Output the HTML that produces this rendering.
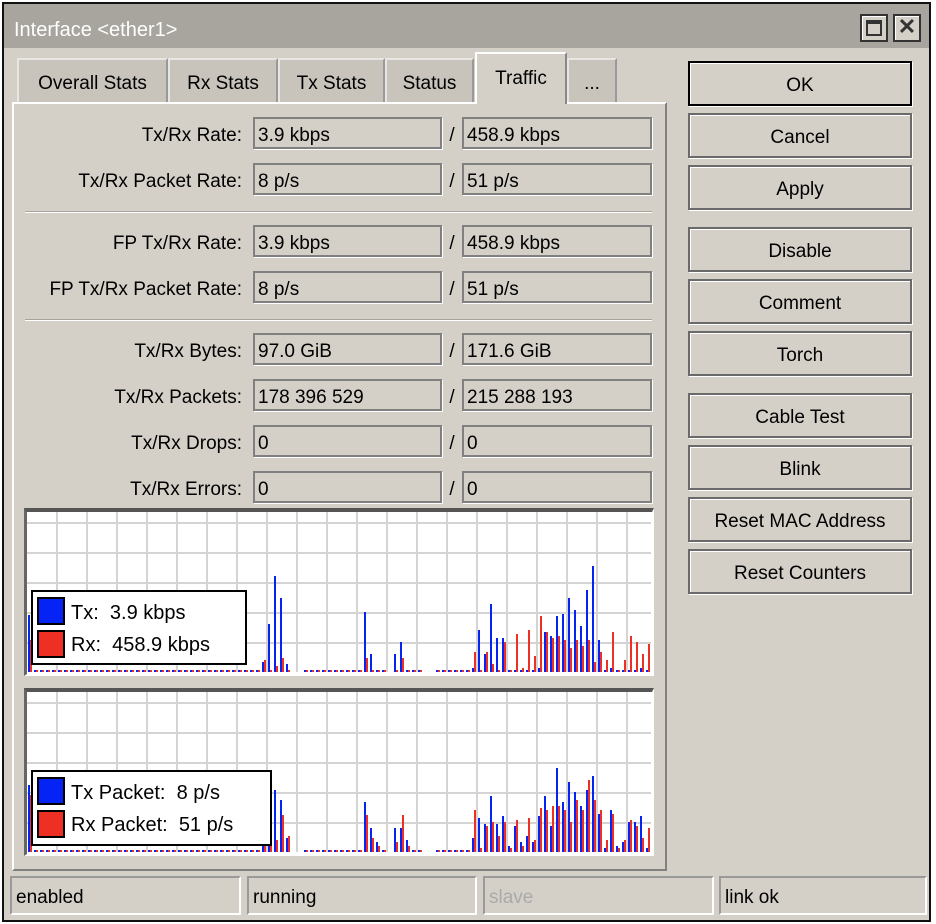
<!DOCTYPE html>
<html><head><meta charset="utf-8"><style>
*{box-sizing:border-box;margin:0;padding:0}
body{width:936px;height:924px;background:#fff;position:relative;overflow:hidden;font-family:"Liberation Sans",sans-serif;font-size:19px;color:#000}
.a{position:absolute}
.win{left:2px;top:2px;width:929px;height:920px;background:#d4d0c8;border:2px solid #111}
.title{left:4px;top:4px;width:925px;height:44px;background:#a8a59f;color:#fff;font-size:20px;line-height:52px;padding-left:10px}
.tb{width:28px;height:28px;top:14px;background:#d4d0c8;border:2px solid #333;box-shadow:inset 1px 1px 0 #fff}
.tab{top:58px;height:44px;background:#c8c4bc;border:2px solid #e8e6e2;border-bottom:none;border-right-color:#999;text-align:center;line-height:48px;font-size:19px}
.tab.on{top:52px;height:52px;background:#d4d0c8;border-color:#fff;border-right-color:#888;line-height:50px;z-index:2}
.panel{left:12px;top:102px;width:655px;height:769px;border:2px solid #fff;border-right-color:#808080;border-bottom-color:#808080}
.lab{width:230px;left:12px;text-align:right;height:32px;line-height:38px}
.f{height:32px;border:2px solid #808080;box-shadow:1px 1px 0 #fff;line-height:34px;padding-left:3px}
.sl{width:10px;text-align:center;left:447px;line-height:38px;height:32px}
.sep{left:25px;width:627px;height:2px;background:#a8a49c;border-bottom:1px solid #fff}
.btn{left:688px;width:224px;height:45px;border:2px solid #6a6a6a;box-shadow:1px 1px 0 #fff,inset 1px 1px 0 #fff;text-align:center;line-height:45px}
.st{top:876px;height:39px;border:2px solid #9a9a9a;border-bottom-color:#fff;border-right-color:#fff;line-height:39px;padding-left:4px}
.leg{background:#fff;border:2px solid #000;font-size:20px}
.sw{position:absolute;left:4px;width:28px;height:28px;border:2px solid #000}
</style></head><body>
<div class="a win"></div>
<div class="a title">Interface &lt;ether1&gt;</div>
<div class="a tb" style="left:860px"><div class="a" style="left:4px;top:4px;width:16px;height:16px;border:2px solid #333;border-top-width:4px"></div></div>
<div class="a tb" style="left:893px;font-weight:bold;font-size:22px;line-height:22px;text-align:center;color:#333">✕</div>

<div class="a panel"></div>
<div class="a tab" style="left:17px;width:151px">Overall Stats</div>
<div class="a tab" style="left:168px;width:110px">Rx Stats</div>
<div class="a tab" style="left:278px;width:107px">Tx Stats</div>
<div class="a tab" style="left:385px;width:89px">Status</div>
<div class="a tab on" style="left:475px;width:92px">Traffic</div>
<div class="a tab" style="left:567px;width:50px">...</div>

<div id="rows"></div>
<div class="a sep" style="top:211px"></div>
<div class="a sep" style="top:319px"></div>

<div class="a" style="left:24px;top:508px;width:630px;height:168px;border:2px solid #fff;border-top:4px solid #555;border-left:3px solid #666;background:#fff"></div>
<div class="a" style="left:24px;top:688px;width:630px;height:168px;border:2px solid #fff;border-top:4px solid #555;border-left:3px solid #666;background:#fff"></div>
<svg class="a" style="left:0;top:0" width="936" height="924" id="sv"></svg>

<div class="a leg" style="left:31px;top:590px;width:216px;height:75px">
<div class="sw" style="top:5px;background:#0523f5"></div><div class="a" style="left:38px;top:10px">Tx:&nbsp; 3.9 kbps</div>
<div class="sw" style="top:38px;background:#ee3024"></div><div class="a" style="left:38px;top:42px">Rx:&nbsp; 458.9 kbps</div></div>
<div class="a leg" style="left:31px;top:770px;width:241px;height:76px">
<div class="sw" style="top:5px;background:#0523f5"></div><div class="a" style="left:38px;top:10px">Tx Packet:&nbsp; 8 p/s</div>
<div class="sw" style="top:38px;background:#ee3024"></div><div class="a" style="left:38px;top:42px">Rx Packet:&nbsp; 51 p/s</div></div>

<div class="a btn" style="top:61px;border-color:#000">OK</div>
<div class="a btn" style="top:113px">Cancel</div>
<div class="a btn" style="top:165px">Apply</div>
<div class="a btn" style="top:227px">Disable</div>
<div class="a btn" style="top:279px">Comment</div>
<div class="a btn" style="top:331px">Torch</div>
<div class="a btn" style="top:393px">Cable Test</div>
<div class="a btn" style="top:445px">Blink</div>
<div class="a btn" style="top:497px">Reset MAC Address</div>
<div class="a btn" style="top:549px">Reset Counters</div>

<div class="a st" style="left:10px;width:231px">enabled</div>
<div class="a st" style="left:247px;width:230px">running</div>
<div class="a st" style="left:483px;width:231px;color:#aaa">slave</div>
<div class="a st" style="left:719px;width:208px">link ok</div>
<script>
var rows=[[117,"Tx/Rx Rate:","3.9 kbps","458.9 kbps"],[163,"Tx/Rx Packet Rate:","8 p/s","51 p/s"],[225,"FP Tx/Rx Rate:","3.9 kbps","458.9 kbps"],[271,"FP Tx/Rx Packet Rate:","8 p/s","51 p/s"],[333,"Tx/Rx Bytes:","97.0 GiB","171.6 GiB"],[379,"Tx/Rx Packets:","178 396 529","215 288 193"],[425,"Tx/Rx Drops:","0","0"],[471,"Tx/Rx Errors:","0","0"]];
var h="";rows.forEach(function(r){h+='<div class="a lab" style="top:'+r[0]+'px">'+r[1]+'</div><div class="a f" style="top:'+r[0]+'px;left:253px;width:189px">'+r[2]+'</div><div class="a sl" style="top:'+r[0]+'px">/</div><div class="a f" style="top:'+r[0]+'px;left:462px;width:190px">'+r[3]+'</div>';});
document.getElementById("rows").innerHTML=h;
var s="";
function grid(top,bot){for(var x=56;x<652;x+=30)s+='<rect x="'+x+'" y="'+top+'" width="2" height="'+(bot-top)+'" fill="#d4d4d4"/>';for(var y=bot-30;y>top;y-=30)s+='<rect x="27" y="'+y+'" width="624" height="2" fill="#d4d4d4"/>';}
grid(512,672);grid(692,852);
var c1={0:[615,640],39:[662,660],40:[624,670],41:[576,666],42:[598,658],43:[664,670],56:[612,658],57:[654,670],61:[654,670],62:[642,658],
74:[668,652],75:[630,670],76:[654,652],77:[604,664],78:[638,670],79:[638,642],81:[670,634],82:[670,668],83:[670,630],84:[670,656],85:[668,616],86:[632,632],87:[636,638],88:[616,636],89:[614,640],90:[598,648],91:[610,640],92:[626,646],93:[590,640],94:[566,662],95:[640,652],96:[670,660],97:[668,632],99:[670,660],100:[670,636],101:[670,642],102:[668,654],103:[670,644]};
var c2={0:[785,795],39:[815,820],40:[800,835],41:[790,840],42:[800,815],43:[838,836],56:[802,815],57:[828,838],58:[842,846],61:[828,842],62:[828,815],63:[840,846],
74:[838,810],75:[818,848],76:[824,826],77:[796,822],78:[824,836],79:[816,822],80:[846,848],81:[826,820],82:[842,846],83:[836,818],84:[842,840],85:[816,808],86:[796,810],87:[826,806],88:[768,806],89:[802,810],90:[782,822],91:[792,800],92:[806,810],93:[790,780],94:[776,800],95:[814,810],96:[848,840],97:[810,814],98:[846,848],99:[842,840],100:[822,820],101:[822,826],102:[816,838],103:[848,828]};
var gaps={44:1,45:1,60:1,66:1,67:1};
function bars(d,base){for(var i=0;i<104;i++){var x=28+6*i;var v=d[i];if(!v){if(gaps[i])continue;v=[base-2,base-2];}
s+='<rect x="'+x+'" y="'+v[0]+'" width="2" height="'+(base-v[0])+'" fill="#0523f5"/>';s+='<rect x="'+(x+2)+'" y="'+v[1]+'" width="2" height="'+(base-v[1])+'" fill="#ee3024"/>';}}
bars(c1,672);bars(c2,852);
document.getElementById("sv").innerHTML=s;
</script>
</body></html>
